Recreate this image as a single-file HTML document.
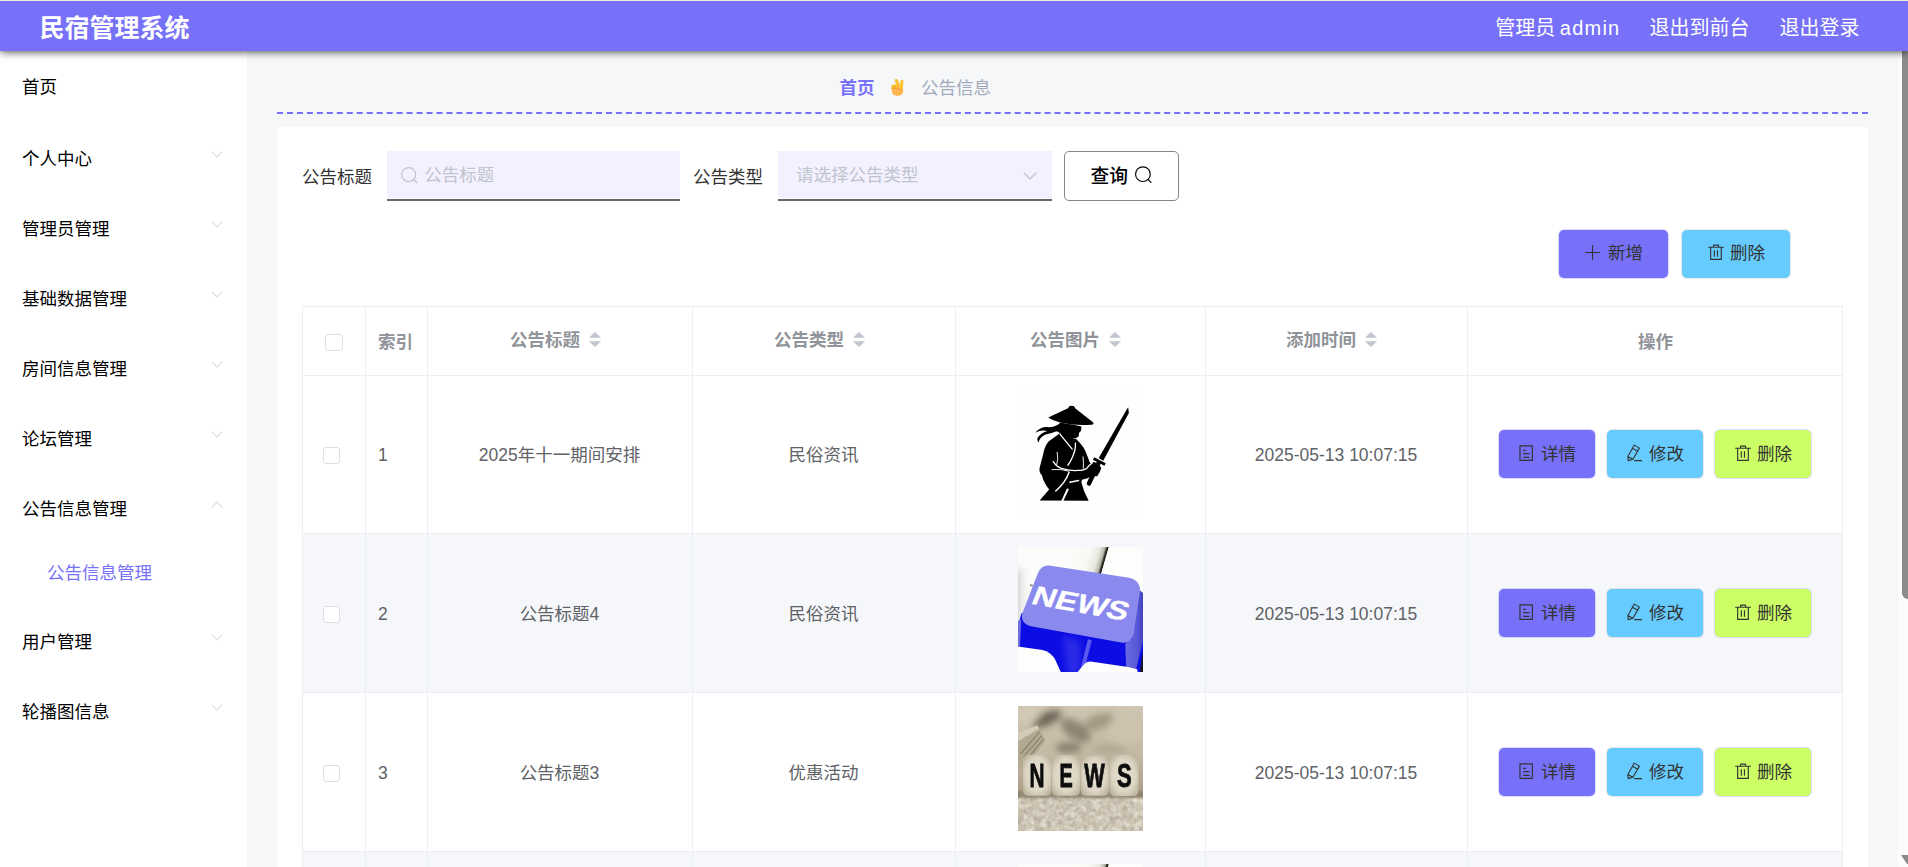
<!DOCTYPE html>
<html lang="zh-CN">
<head>
<meta charset="utf-8">
<title>民宿管理系统</title>
<style>
*{box-sizing:border-box;margin:0;padding:0}
html,body{width:1908px;height:867px;overflow:hidden}
body{position:relative;background:#f6f7f9;font-family:"Liberation Sans","Noto Sans CJK SC",sans-serif;color:#000;font-size:17.5px}
div,span{white-space:nowrap}
svg{display:block;overflow:visible}
#topline{position:absolute;left:0;top:0;width:1908px;height:1px;background:#ecedde;z-index:9}
#hdr{position:absolute;left:0;top:0;width:1908px;height:51px;background:#7671f8;box-shadow:0 1px 8px rgba(0,0,0,.7);z-index:5}
#hdr .title{position:absolute;left:39.5px;top:10px;line-height:36px;font-size:25px;font-weight:bold;color:#fff}
#hdr .r{position:absolute;top:13px;line-height:30px;font-size:20px;color:#fff}
#side{position:absolute;left:0;top:51px;width:247px;height:816px;background:#fff;z-index:1}
#side .it{position:absolute;left:22px;font-size:17.5px;line-height:26px;height:26px;color:#000}
#side .it.sub{color:#7671f8;left:47px}
#side svg.ar{position:absolute;left:211px;width:12px;height:7px}
#bc{position:absolute;left:277px;top:51px;width:1591px;height:63px;border-bottom:2px dashed #7671f8}
#bc .t{position:absolute;top:24px;line-height:26px;font-size:17.5px}
#card{position:absolute;left:277px;top:127px;width:1591px;height:760px;background:#fff}
.lbl{position:absolute;top:164px;line-height:26px;font-size:17.5px;color:#333}
.inp{position:absolute;top:151px;height:50px;background:#f3f1ff;border-bottom:2px solid #686866;box-shadow:inset 0 -1px 0 #fcfbff}
.inp .ph{position:absolute;top:11px;line-height:26px;font-size:17.5px;color:#c0c4cc}
.qbtn{position:absolute;left:1064px;top:151px;width:115px;height:50px;border:1px solid #838589;border-radius:5px;background:#fff}
.qbtn .tx{position:absolute;left:25.4px;top:11px;line-height:28px;font-size:18.75px;font-weight:500;color:#000}
.btn{position:absolute;height:48px;border-radius:5px;color:#333;font-size:17.5px}
.btn .tx{position:absolute;top:10px;line-height:26px}
.btn svg{position:absolute}
.c1{background:#7671f8;box-shadow:0 0 0 1px rgba(118,113,248,.25)}.c2{background:#66ccff;box-shadow:0 0 0 1px rgba(200,180,180,.35)}.c3{background:#ccff66;box-shadow:0 0 0 1px rgba(190,190,240,.5)}
#tb{position:absolute;left:302px;top:306px;width:1541px;height:600px;border-left:1px solid #ebeef5;border-top:1px solid #ebeef5;border-right:1px solid #ebeef5;background:#fff}
.vl{position:absolute;top:306px;width:1px;height:600px;background:#ebeef5}
.hl{position:absolute;left:302px;width:1541px;height:1px;background:#ebeef5}
.stripe{position:absolute;left:303px;width:1539px;background:#f5f7fa}
.th{position:absolute;top:327px;line-height:26px;font-size:17.5px;font-weight:bold;color:#909399}
.td{position:absolute;line-height:26px;font-size:17.5px;color:#606266}
.ck{position:absolute;width:17px;height:17px;border:1px solid #dcdfe6;border-radius:3px;background:#fff}
.sort{position:absolute;width:12px;height:15px}
.img{position:absolute;left:1018px;width:125px;height:125px;overflow:hidden}
#sbt{position:absolute;left:1898px;top:51px;width:10px;height:816px;background:#fcfcfc;z-index:4}
#sbth{position:absolute;left:1902px;top:40px;width:12px;height:559px;background:#8b8b8b;border-radius:6px;z-index:4}
</style>
</head>
<body>
<div id="hdr"><div class="title">民宿管理系统</div><div class="r" style="left:1495.3px;word-spacing:-1.1px">管理员 <span style="letter-spacing:1.25px">admin</span></div><div class="r" style="left:1649.4px">退出到前台</div><div class="r" style="left:1779.4px">退出登录</div></div>
<div id="side"><div class="it" style="top:23px">首页</div><div class="it" style="top:95px">个人中心</div><svg class="ar" style="top:100px" viewBox="0 0 12 7"><path d="M0.7 0.7 L6 6 L11.3 0.7" fill="none" stroke="#dadde7" stroke-width="1.15"/></svg><div class="it" style="top:165px">管理员管理</div><svg class="ar" style="top:170px" viewBox="0 0 12 7"><path d="M0.7 0.7 L6 6 L11.3 0.7" fill="none" stroke="#dadde7" stroke-width="1.15"/></svg><div class="it" style="top:235px">基础数据管理</div><svg class="ar" style="top:240px" viewBox="0 0 12 7"><path d="M0.7 0.7 L6 6 L11.3 0.7" fill="none" stroke="#dadde7" stroke-width="1.15"/></svg><div class="it" style="top:305px">房间信息管理</div><svg class="ar" style="top:310px" viewBox="0 0 12 7"><path d="M0.7 0.7 L6 6 L11.3 0.7" fill="none" stroke="#dadde7" stroke-width="1.15"/></svg><div class="it" style="top:375px">论坛管理</div><svg class="ar" style="top:380px" viewBox="0 0 12 7"><path d="M0.7 0.7 L6 6 L11.3 0.7" fill="none" stroke="#dadde7" stroke-width="1.15"/></svg><div class="it" style="top:445px">公告信息管理</div><svg class="ar" style="top:450px" viewBox="0 0 12 7"><path d="M0.7 6.3 L6 1 L11.3 6.3" fill="none" stroke="#dadde7" stroke-width="1.15"/></svg><div class="it" style="top:578px">用户管理</div><svg class="ar" style="top:583px" viewBox="0 0 12 7"><path d="M0.7 0.7 L6 6 L11.3 0.7" fill="none" stroke="#dadde7" stroke-width="1.15"/></svg><div class="it" style="top:648px">轮播图信息</div><svg class="ar" style="top:653px" viewBox="0 0 12 7"><path d="M0.7 0.7 L6 6 L11.3 0.7" fill="none" stroke="#dadde7" stroke-width="1.15"/></svg><div class="it sub" style="top:509px">公告信息管理</div></div>
<div id="bc"><div class="t" style="left:562.5px;font-weight:bold;color:#7671f8">首页</div><svg style="position:absolute;left:613px;top:27px;width:14px;height:18px" viewBox="0 0 14 18"><path d="M1.3 8.4 Q1.2 7 2.9 7 Q4 6.2 5.4 6.4 L12.6 8.5 L12.9 13 L1.6 12 Z" fill="#fbc02d"/><path d="M6.4 2.6 L8.9 9" stroke="#fbc02d" stroke-width="3.2" stroke-linecap="round" fill="none"/><path d="M11.9 3.3 L11.2 10" stroke="#fcc934" stroke-width="3.2" stroke-linecap="round" fill="none"/><path d="M3.9 7.2 L4.4 9.6" stroke="#e8a317" stroke-width=".7" fill="none"/><ellipse cx="7.5" cy="13.5" rx="5.7" ry="4.4" fill="#ffb74d"/><path d="M1.6 10.6 Q6 9.6 9 11 Q11.4 12 12.8 11.4" stroke="#f29b3c" stroke-width="1" fill="none"/></svg><div class="t" style="left:644px;color:#a1a9bb">公告信息</div></div>
<div id="card"></div>
<div class="lbl" style="left:302px">公告标题</div><div class="inp" style="left:387px;width:293px"><svg style="position:absolute;left:14px;top:16px;width:18px;height:18px" viewBox="0 0 18 18"><circle cx="7.67" cy="7.56" r="7" fill="none" stroke="#c0c4cc" stroke-width="1.25"/><path d="M12.62 12.51 L15.9 15.7" stroke="#c0c4cc" stroke-width="1.25" fill="none" stroke-linecap="round"/></svg><div class="ph" style="left:37.3px">公告标题</div></div><div class="lbl" style="left:693px">公告类型</div><div class="inp" style="left:778px;width:274px"><div class="ph" style="left:18px">请选择公告类型</div><svg style="position:absolute;left:245px;top:21px;width:14px;height:8px" viewBox="0 0 14 8"><path d="M0.8 0.8 L7 7 L13.2 0.8" fill="none" stroke="#c0c4cc" stroke-width="1.4"/></svg></div><div class="qbtn"><div class="tx">查询</div><svg style="position:absolute;left:69px;top:14px;width:18px;height:18px" viewBox="0 0 18 18"><circle cx="8.9" cy="8.15" r="7.35" fill="none" stroke="#000" stroke-width="1.15"/><path d="M14.10 13.35 L17 16.4" stroke="#000" stroke-width="1.15" fill="none" stroke-linecap="round"/></svg></div>
<div class="btn c1" style="left:1559px;top:230px;width:109px"><svg style="left:25px;top:15px;width:16px;height:16px" viewBox="0 0 16 16"><path d="M8.5 0.1 V14.8 M1.3 7.5 H15.8" stroke="#333" stroke-width="1.15" fill="none"/></svg><div class="tx" style="left:49px">新增</div></div><div class="btn c2" style="left:1682px;top:230px;width:108px"><svg style="left:26px;top:14px;width:16px;height:17px" viewBox="0 0 16 17"><path d="M0.2 3.2 H15.9 M5.3 3.2 L5.8 1.05 H10.4 L10.9 3.2 M2.65 3.2 V15.3 H13.3 V3.2 M6.3 6.2 V12.7 M9.45 6.2 V12.7" stroke="#333" stroke-width="1.15" fill="none"/></svg><div class="tx" style="left:48px">删除</div></div>
<div id="tb"></div><div class="stripe" style="top:534px;height:158px"></div><div class="stripe" style="top:852px;height:158px"></div><div class="vl" style="left:365px"></div><div class="vl" style="left:427px"></div><div class="vl" style="left:692px"></div><div class="vl" style="left:955px"></div><div class="vl" style="left:1205px"></div><div class="vl" style="left:1467px"></div><div class="hl" style="top:375px"></div><div class="hl" style="top:533px"></div><div class="hl" style="top:692px"></div><div class="hl" style="top:851px"></div>
<div class="ck" style="left:325px;top:334px;width:18px"></div><div class="th" style="left:378px;top:329px">索引</div><div class="th" style="left:510px">公告标题</div><svg class="sort" style="left:589px;top:332px" viewBox="0 0 12 15"><path d="M0 5.8 L6 0 L12 5.8 Z M0 9.2 L6 15 L12 9.2 Z" fill="#c0c4cc"/></svg><div class="th" style="left:774px">公告类型</div><svg class="sort" style="left:853px;top:332px" viewBox="0 0 12 15"><path d="M0 5.8 L6 0 L12 5.8 Z M0 9.2 L6 15 L12 9.2 Z" fill="#c0c4cc"/></svg><div class="th" style="left:1030px">公告图片</div><svg class="sort" style="left:1109px;top:332px" viewBox="0 0 12 15"><path d="M0 5.8 L6 0 L12 5.8 Z M0 9.2 L6 15 L12 9.2 Z" fill="#c0c4cc"/></svg><div class="th" style="left:1286px">添加时间</div><svg class="sort" style="left:1365px;top:332px" viewBox="0 0 12 15"><path d="M0 5.8 L6 0 L12 5.8 Z M0 9.2 L6 15 L12 9.2 Z" fill="#c0c4cc"/></svg><div class="th" style="left:1638px;top:329px">操作</div>
<div class="ck" style="left:323px;top:447px"></div><div class="td" style="left:378px;top:442px">1</div><div class="td" style="left:427px;width:265px;text-align:center;top:442px">2025年十一期间安排</div><div class="td" style="left:692px;width:263px;text-align:center;top:442px">民俗资讯</div><div class="img" style="top:390px"><svg width="125" height="125" viewBox="0 0 125 125"><g><rect width="125" height="125" fill="#fefefe"/><g transform="scale(0.14418)">
<g filter="url(#b2)">
<path d="M210,190 L350,124 Q372,98 394,124 L520,224 Q532,240 508,241 Q400,250 292,226 Q240,212 210,190 Z" fill="#000"/>
<ellipse cx="372" cy="126" rx="22" ry="17" fill="#000"/>
<path d="M290,226 L402,244 L440,254 L437,283 L424,297 L420,323 L397,337 L381,333 L380,352 L320,340 L296,300 L284,262 Z" fill="#000"/>
<path d="M292,230 Q250,262 200,257 Q150,257 120,297 Q160,273 204,284 Q160,297 136,330 Q128,350 142,366 Q150,326 192,309 Q236,300 268,286 L298,302 Z" fill="#000"/>
<path d="M290,300 L214,356 Q186,386 176,440 L150,540 Q144,572 166,592 Q176,642 216,690 L150,766 L490,768 L459,703 L440,641 L443,622 L476,613 L515,596 L549,598 L567,569 L578,541 L556,512 L527,500 L501,508 L482,462 Q470,420 454,398 Q430,365 403,340 L384,336 Z" fill="#000"/>
<path d="M560,471 L751,140 L764,120 L769,160 L591,490 Z" fill="#000"/>
<path d="M528.7,466.3 L608.5,507.9 L599.3,525.7 L519.5,484.1 Z" fill="#000"/>
<path d="M558,508 L492,648" stroke="#000" stroke-width="31" stroke-linecap="round" fill="none"/>
</g>
<g fill="none" stroke="#fefefe" stroke-linecap="round" filter="url(#b2)">
<path d="M292,308 L376,410" stroke-width="9"/>
<path d="M398,368 Q402,410 380,460 Q366,496 346,522" stroke-width="9"/>
<path d="M272,432 Q282,480 268,520" stroke-width="6.5"/>
<path d="M244,496 Q262,528 296,542 Q352,562 414,558 Q460,556 478,542 Q494,522 516,505" stroke-width="9"/>
<path d="M236,552 Q300,546 350,562" stroke-width="6.5"/>
<path d="M354,570 Q330,640 262,700" stroke-width="10"/>
<path d="M360,640 L420,628" stroke-width="10"/>
<path d="M451,464 Q456,510 453,544" stroke-width="6.5"/>
<path d="M344,690 L306,772" stroke-width="14"/>
</g>
</g></g></svg></div><div class="td" style="left:1205px;width:262px;text-align:center;top:442px">2025-05-13 10:07:15</div><div class="btn c1" style="left:1499px;top:430px;width:96px"><svg style="left:20px;top:15px;width:14px;height:17px" viewBox="0 0 14 17"><path d="M0.95 0.85 H13.35 V15.35 H0.95 Z M4.2 5.4 H6.9 M4.2 8.6 H10.5 M4.2 12.4 H10.5" stroke="#333" stroke-width="1.15" fill="none"/></svg><div class="tx" style="left:42px;top:11px">详情</div></div><div class="btn c2" style="left:1607px;top:430px;width:96px"><svg style="left:20px;top:14px;width:17px;height:18px" viewBox="0 0 17 18"><path d="M7.3 1.1 L12.4 4.1 L5.9 15.2 L1.3 16.6 L0.85 12.4 Z M0.85 12.4 L5.9 15.2 M5.9 4.5 L10.7 7.2 M7.1 16.6 H15.1" stroke="#333" stroke-width="1.1" fill="none" stroke-linejoin="round"/></svg><div class="tx" style="left:42px;top:11px">修改</div></div><div class="btn c3" style="left:1715px;top:430px;width:96px"><svg style="left:20px;top:15px;width:16px;height:17px" viewBox="0 0 16 17"><path d="M0.2 3.2 H15.9 M5.3 3.2 L5.8 1.05 H10.4 L10.9 3.2 M2.65 3.2 V15.3 H13.3 V3.2 M6.3 6.2 V12.7 M9.45 6.2 V12.7" stroke="#333" stroke-width="1.15" fill="none"/></svg><div class="tx" style="left:42px;top:11px">删除</div></div>
<div class="ck" style="left:323px;top:606px"></div><div class="td" style="left:378px;top:601px">2</div><div class="td" style="left:427px;width:265px;text-align:center;top:601px">公告标题4</div><div class="td" style="left:692px;width:263px;text-align:center;top:601px">民俗资讯</div><div class="img" style="top:547px"><svg width="125" height="125" viewBox="0 0 125 125"><g><rect width="125" height="125" fill="#fcfcfa"/><g transform="scale(0.14418)">
<g transform="skewX(-16)"><rect x="380" y="-10" width="250" height="300" fill="url(#wkey2)"/><rect x="630" y="-10" width="400" height="340" fill="#fdfdfb"/></g>
<rect x="-50" y="150" width="110" height="430" fill="url(#lsh)" filter="url(#b25)"/>
<path d="M84,258 L104,262 L101,274 L81,270 Z" fill="#8a8a80" filter="url(#b4)"/>
<path d="M25,460 L-5,560 L-5,880 L880,880 L880,380 L845,300 Z" fill="#0c0ce4"/>
<path d="M310,620 L430,650 L440,880 L340,880 Z" fill="#2a2ae8" filter="url(#b25)"/>
<path d="M485,640 L512,646 L452,880 L425,880 Z" fill="#5a5af0" filter="url(#b4)"/>
<path d="M-10,520 L22,500 L14,690 L-10,690 Z" fill="#6c6ce4" filter="url(#b4)"/>
<path d="M744,670 L790,640 L845,300 L880,330 L880,600 L818,850 L750,836 Z" fill="url(#kright)"/>
<path d="M880,640 L846,850 L850,880 L880,880 Z" fill="#16162c" filter="url(#b4)"/>
<path d="M-20,688 L170,714 Q225,728 255,775 L305,885 L-20,885 Z" fill="#fdfdfb" filter="url(#b4)"/>
<path d="M398,885 L462,810 Q482,790 515,796 L763,832 L826,848 L834,885 Z" fill="#fdfdfb" filter="url(#b4)"/>
<path d="M216,128 L770,214 Q852,234 846,312 L800,610 Q784,672 714,662 L90,550 Q14,530 30,460 L138,182 Q160,124 216,128 Z" fill="#8989ee"/>
<text transform="matrix(1.25 0.226 -0.40 1 84 392)" font-family="'Liberation Sans',sans-serif" font-weight="bold" font-size="176" fill="#ffffff" stroke="#ffffff" stroke-width="2">NEWS</text>
</g></g></svg></div><div class="td" style="left:1205px;width:262px;text-align:center;top:601px">2025-05-13 10:07:15</div><div class="btn c1" style="left:1499px;top:589px;width:96px"><svg style="left:20px;top:15px;width:14px;height:17px" viewBox="0 0 14 17"><path d="M0.95 0.85 H13.35 V15.35 H0.95 Z M4.2 5.4 H6.9 M4.2 8.6 H10.5 M4.2 12.4 H10.5" stroke="#333" stroke-width="1.15" fill="none"/></svg><div class="tx" style="left:42px;top:11px">详情</div></div><div class="btn c2" style="left:1607px;top:589px;width:96px"><svg style="left:20px;top:14px;width:17px;height:18px" viewBox="0 0 17 18"><path d="M7.3 1.1 L12.4 4.1 L5.9 15.2 L1.3 16.6 L0.85 12.4 Z M0.85 12.4 L5.9 15.2 M5.9 4.5 L10.7 7.2 M7.1 16.6 H15.1" stroke="#333" stroke-width="1.1" fill="none" stroke-linejoin="round"/></svg><div class="tx" style="left:42px;top:11px">修改</div></div><div class="btn c3" style="left:1715px;top:589px;width:96px"><svg style="left:20px;top:15px;width:16px;height:17px" viewBox="0 0 16 17"><path d="M0.2 3.2 H15.9 M5.3 3.2 L5.8 1.05 H10.4 L10.9 3.2 M2.65 3.2 V15.3 H13.3 V3.2 M6.3 6.2 V12.7 M9.45 6.2 V12.7" stroke="#333" stroke-width="1.15" fill="none"/></svg><div class="tx" style="left:42px;top:11px">删除</div></div>
<div class="ck" style="left:323px;top:765px"></div><div class="td" style="left:378px;top:760px">3</div><div class="td" style="left:427px;width:265px;text-align:center;top:760px">公告标题3</div><div class="td" style="left:692px;width:263px;text-align:center;top:760px">优惠活动</div><div class="img" style="top:706px"><svg width="125" height="125" viewBox="0 0 125 125"><g><rect width="125" height="125" fill="#c8bca8"/><g transform="scale(0.14418)">
<rect width="867" height="867" fill="url(#dbg)"/>
<g filter="url(#b25)">
<ellipse cx="200" cy="90" rx="110" ry="45" fill="#6e6556" transform="rotate(-25 200 90)"/>
<ellipse cx="400" cy="170" rx="120" ry="60" fill="#8d8371" transform="rotate(35 400 170)"/>
<ellipse cx="350" cy="290" rx="90" ry="35" fill="#857b69"/>
<ellipse cx="560" cy="110" rx="110" ry="50" fill="#a39883" transform="rotate(-20 560 110)"/>
<ellipse cx="740" cy="170" rx="120" ry="100" fill="#cdc3af"/>
<ellipse cx="640" cy="300" rx="120" ry="40" fill="#b3a994"/>
<ellipse cx="60" cy="60" rx="90" ry="60" fill="#d2c9b7"/>
</g>
<rect x="0" y="606" width="867" height="261" fill="#cdc3b0"/>
<rect x="0" y="600" width="867" height="267" filter="url(#noise)"/>
<rect x="0" y="600" width="867" height="267" filter="url(#noise2)"/>
<rect x="-20" y="592" width="907" height="46" fill="#7d735f" opacity=".75" filter="url(#b8)"/>
<g filter="url(#b2)">
<path d="M-10,185 L135,136 L190,240 L70,400 L-10,450 Z" fill="#b3a992"/>
<path d="M-10,185 L135,136 L146,158 L-10,250 Z" fill="#d3cbb8"/>
<path d="M20,330 L150,180 M40,350 L165,205 M60,375 L178,225" stroke="#857b66" stroke-width="7" fill="none"/>
<rect x="35" y="338" width="196" height="284" rx="34" fill="url(#cube)"/>
<rect x="235" y="342" width="196" height="280" rx="34" fill="url(#cube)"/>
<rect x="435" y="344" width="196" height="278" rx="34" fill="url(#cube)"/>
<rect x="635" y="340" width="200" height="284" rx="34" fill="url(#cube)"/>
</g>
<g font-family="'Liberation Sans',sans-serif" font-weight="bold" font-size="226" fill="#0b0b0b" stroke="#0b0b0b" stroke-width="6" text-anchor="middle" filter="url(#b2)">
<text x="131" y="562" textLength="104" lengthAdjust="spacingAndGlyphs">N</text>
<text x="334" y="562" textLength="92" lengthAdjust="spacingAndGlyphs">E</text>
<text x="531" y="562" textLength="142" lengthAdjust="spacingAndGlyphs">W</text>
<text x="737" y="562" textLength="102" lengthAdjust="spacingAndGlyphs">S</text>
</g>
</g></g></svg></div><div class="td" style="left:1205px;width:262px;text-align:center;top:760px">2025-05-13 10:07:15</div><div class="btn c1" style="left:1499px;top:748px;width:96px"><svg style="left:20px;top:15px;width:14px;height:17px" viewBox="0 0 14 17"><path d="M0.95 0.85 H13.35 V15.35 H0.95 Z M4.2 5.4 H6.9 M4.2 8.6 H10.5 M4.2 12.4 H10.5" stroke="#333" stroke-width="1.15" fill="none"/></svg><div class="tx" style="left:42px;top:11px">详情</div></div><div class="btn c2" style="left:1607px;top:748px;width:96px"><svg style="left:20px;top:14px;width:17px;height:18px" viewBox="0 0 17 18"><path d="M7.3 1.1 L12.4 4.1 L5.9 15.2 L1.3 16.6 L0.85 12.4 Z M0.85 12.4 L5.9 15.2 M5.9 4.5 L10.7 7.2 M7.1 16.6 H15.1" stroke="#333" stroke-width="1.1" fill="none" stroke-linejoin="round"/></svg><div class="tx" style="left:42px;top:11px">修改</div></div><div class="btn c3" style="left:1715px;top:748px;width:96px"><svg style="left:20px;top:15px;width:16px;height:17px" viewBox="0 0 16 17"><path d="M0.2 3.2 H15.9 M5.3 3.2 L5.8 1.05 H10.4 L10.9 3.2 M2.65 3.2 V15.3 H13.3 V3.2 M6.3 6.2 V12.7 M9.45 6.2 V12.7" stroke="#333" stroke-width="1.15" fill="none"/></svg><div class="tx" style="left:42px;top:11px">删除</div></div>
<div class="img" style="top:864px"><svg width="125" height="125" viewBox="0 0 125 125"><g><rect width="125" height="125" fill="#fcfcfa"/><g transform="scale(0.14418)">
<g transform="skewX(-16)"><rect x="380" y="-10" width="250" height="300" fill="url(#wkey2)"/><rect x="630" y="-10" width="400" height="340" fill="#fdfdfb"/></g>
<rect x="-50" y="150" width="110" height="430" fill="url(#lsh)" filter="url(#b25)"/>
<path d="M84,258 L104,262 L101,274 L81,270 Z" fill="#8a8a80" filter="url(#b4)"/>
<path d="M25,460 L-5,560 L-5,880 L880,880 L880,380 L845,300 Z" fill="#0c0ce4"/>
<path d="M310,620 L430,650 L440,880 L340,880 Z" fill="#2a2ae8" filter="url(#b25)"/>
<path d="M485,640 L512,646 L452,880 L425,880 Z" fill="#5a5af0" filter="url(#b4)"/>
<path d="M-10,520 L22,500 L14,690 L-10,690 Z" fill="#6c6ce4" filter="url(#b4)"/>
<path d="M744,670 L790,640 L845,300 L880,330 L880,600 L818,850 L750,836 Z" fill="url(#kright)"/>
<path d="M880,640 L846,850 L850,880 L880,880 Z" fill="#16162c" filter="url(#b4)"/>
<path d="M-20,688 L170,714 Q225,728 255,775 L305,885 L-20,885 Z" fill="#fdfdfb" filter="url(#b4)"/>
<path d="M398,885 L462,810 Q482,790 515,796 L763,832 L826,848 L834,885 Z" fill="#fdfdfb" filter="url(#b4)"/>
<path d="M216,128 L770,214 Q852,234 846,312 L800,610 Q784,672 714,662 L90,550 Q14,530 30,460 L138,182 Q160,124 216,128 Z" fill="#8989ee"/>
<text transform="matrix(1.25 0.226 -0.40 1 84 392)" font-family="'Liberation Sans',sans-serif" font-weight="bold" font-size="176" fill="#ffffff" stroke="#ffffff" stroke-width="2">NEWS</text>
</g></g></svg></div>
<svg width="0" height="0" style="position:absolute;left:0;top:0"><defs>
<filter id="b8" x="-20%" y="-20%" width="140%" height="140%"><feGaussianBlur stdDeviation="8"/></filter>
<filter id="b25" x="-50%" y="-50%" width="200%" height="200%"><feGaussianBlur stdDeviation="25"/></filter>
<filter id="b4" x="-20%" y="-20%" width="140%" height="140%"><feGaussianBlur stdDeviation="4"/></filter>
<filter id="b2" x="-20%" y="-20%" width="140%" height="140%"><feGaussianBlur stdDeviation="2.2"/></filter>
<filter id="noise" x="0" y="0" width="100%" height="100%"><feTurbulence type="fractalNoise" baseFrequency="0.03" numOctaves="3" seed="7"/><feColorMatrix type="matrix" values="0 0 0 0 0.42  0 0 0 0 0.38  0 0 0 0 0.31  1.3 1.3 0 0 -1.0"/></filter>
<filter id="noise2" x="0" y="0" width="100%" height="100%"><feTurbulence type="fractalNoise" baseFrequency="0.025" numOctaves="2" seed="23"/><feColorMatrix type="matrix" values="0 0 0 0 0.90  0 0 0 0 0.87  0 0 0 0 0.80  0 1.2 1.2 0 -1.0"/></filter>
<linearGradient id="kside" x1="0" y1="0" x2="1" y2="0"><stop offset="0" stop-color="#1010d8"/><stop offset=".45" stop-color="#1a1ae6"/><stop offset=".58" stop-color="#5a5af2"/><stop offset=".68" stop-color="#1616e0"/><stop offset="1" stop-color="#0c0cc8"/></linearGradient>
<linearGradient id="wkey" x1="0" y1="0" x2="1" y2="0"><stop offset="0" stop-color="#f6f6f2"/><stop offset=".7" stop-color="#f1f1ec"/><stop offset=".9" stop-color="#d4d4c8"/><stop offset="1" stop-color="#9c9c90"/></linearGradient>
<linearGradient id="wkey2" x1="0" y1="0" x2="1" y2="0"><stop offset="0" stop-color="#fcfcfa"/><stop offset=".5" stop-color="#f8f8f4"/><stop offset=".76" stop-color="#e9e9e1"/><stop offset=".9" stop-color="#b4b4a6"/><stop offset=".95" stop-color="#3a3a30"/><stop offset="1" stop-color="#0c0c0a"/></linearGradient>
<linearGradient id="kright" x1="0" y1="0" x2="1" y2="0"><stop offset="0" stop-color="#6a6ae4"/><stop offset=".6" stop-color="#5858d8"/><stop offset="1" stop-color="#3c3cb0"/></linearGradient>
<linearGradient id="lsh" x1="0" y1="0" x2="1" y2="0"><stop offset="0" stop-color="#bdbdc4"/><stop offset="1" stop-color="#fcfcfa"/></linearGradient>
<radialGradient id="cube" cx=".5" cy=".5" r=".62"><stop offset="0" stop-color="#e6e1d3"/><stop offset=".65" stop-color="#dcd5c4"/><stop offset="1" stop-color="#bdb39d"/></radialGradient>
<linearGradient id="dbg" x1="0" y1="0" x2="0" y2="1"><stop offset="0" stop-color="#cfc5b2"/><stop offset=".4" stop-color="#c4b9a4"/><stop offset=".72" stop-color="#a89c86"/><stop offset=".76" stop-color="#c9bfab"/><stop offset="1" stop-color="#d3cab8"/></linearGradient>
</defs></svg>
<div id="sbt"><svg style="position:absolute;left:3px;top:804px;width:10px;height:9px" viewBox="0 0 10 9"><path d="M0 0 H10 V9 H6 Z" fill="#8b8b8b"/></svg></div><div id="sbth"></div>
<div id="topline"></div>
</body>
</html>
